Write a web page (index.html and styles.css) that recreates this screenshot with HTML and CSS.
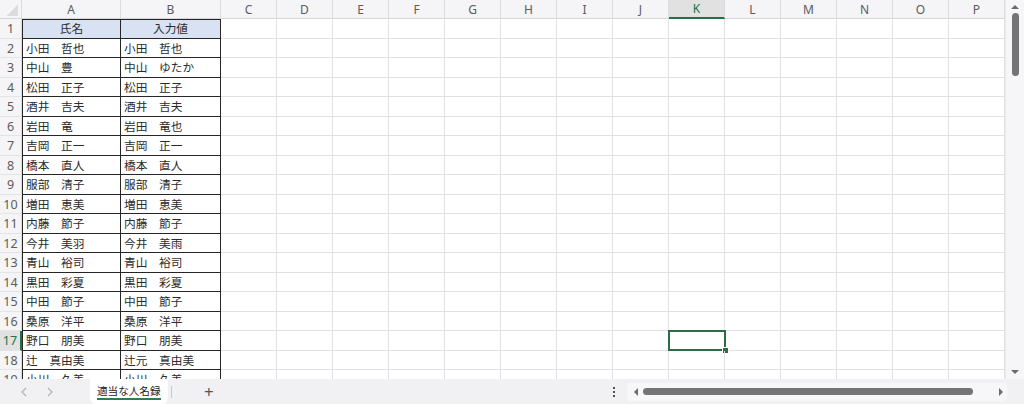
FILE: index.html
```html
<!DOCTYPE html>
<html lang="ja">
<head>
  <meta charset="UTF-8">
  <title>適当な人名録</title>
  <link rel="stylesheet" href="styles.css">
</head>
<body>

  <div class="book">
    <div class="main">
      <div class="sheet">
        <!-- column headings -->
        <div class="corner"></div>
        <div class="ch">A</div>
        <div class="ch">B</div>
        <div class="heads">
          <div class="ch w">C</div><div class="ch w">D</div><div class="ch w">E</div><div class="ch w">F</div>
          <div class="ch w">G</div><div class="ch w">H</div><div class="ch w">I</div><div class="ch w">J</div>
          <div class="ch w active">K</div><div class="ch w">L</div><div class="ch w">M</div><div class="ch w">N</div>
          <div class="ch w">O</div><div class="ch w">P</div>
        </div>

        <div class="rn">1</div><div class="c a hd top">氏名</div><div class="c hd top">入力値</div><div class="blank"></div>
        <div class="rn">2</div><div class="c a">小田　哲也</div><div class="c">小田　哲也</div><div class="blank"></div>
        <div class="rn">3</div><div class="c a">中山　豊</div><div class="c">中山　ゆたか</div><div class="blank"></div>
        <div class="rn">4</div><div class="c a">松田　正子</div><div class="c">松田　正子</div><div class="blank"></div>
        <div class="rn">5</div><div class="c a">酒井　吉夫</div><div class="c">酒井　吉夫</div><div class="blank"></div>
        <div class="rn">6</div><div class="c a">岩田　竜</div><div class="c">岩田　竜也</div><div class="blank"></div>
        <div class="rn">7</div><div class="c a">吉岡　正一</div><div class="c">吉岡　正一</div><div class="blank"></div>
        <div class="rn">8</div><div class="c a">橋本　直人</div><div class="c">橋本　直人</div><div class="blank"></div>
        <div class="rn">9</div><div class="c a">服部　清子</div><div class="c">服部　清子</div><div class="blank"></div>
        <div class="rn">10</div><div class="c a">増田　恵美</div><div class="c">増田　恵美</div><div class="blank"></div>
        <div class="rn">11</div><div class="c a">内藤　節子</div><div class="c">内藤　節子</div><div class="blank"></div>
        <div class="rn">12</div><div class="c a">今井　美羽</div><div class="c">今井　美雨</div><div class="blank"></div>
        <div class="rn">13</div><div class="c a">青山　裕司</div><div class="c">青山　裕司</div><div class="blank"></div>
        <div class="rn">14</div><div class="c a">黒田　彩夏</div><div class="c">黒田　彩夏</div><div class="blank"></div>
        <div class="rn">15</div><div class="c a">中田　節子</div><div class="c">中田　節子</div><div class="blank"></div>
        <div class="rn">16</div><div class="c a">桑原　洋平</div><div class="c">桑原　洋平</div><div class="blank"></div>
        <div class="rn active">17</div><div class="c a">野口　朋美</div><div class="c">野口　朋美</div><div class="blank"><span class="cursor"></span></div>
        <div class="rn">18</div><div class="c a">辻　真由美</div><div class="c">辻元　真由美</div><div class="blank"></div>
        <div class="rn">19</div><div class="c a">小川　久美</div><div class="c">小川　久美</div><div class="blank"></div>
      </div>

      <div class="vscroll">
        <span class="arrow up"></span>
        <span class="vthumb"></span>
        <span class="arrow down"></span>
      </div>
    </div>

    <div class="tabbar">
      <div class="nav">
        <svg width="6" height="10" viewBox="0 0 6 10"><path d="M5 1 1 5l4 4" fill="none" stroke="#b3b3b3" stroke-width="1.2"/></svg>
        <svg width="6" height="10" viewBox="0 0 6 10"><path d="M1 1l4 4-4 4" fill="none" stroke="#b3b3b3" stroke-width="1.2"/></svg>
      </div>
      <div class="tab"><span>適当な人名録</span></div>
      <div class="sep"></div>
      <div class="add">+</div>
      <div class="spacer"></div>
      <div class="more"><i></i><i></i><i></i></div>
      <div class="hscroll">
        <span class="arrow left"></span>
        <span class="hthumb"></span>
        <span class="arrow right"></span>
      </div>
      <div class="corner-fill"></div>
    </div>
  </div>

</body>
</html>
```

FILE: styles.css
```css
* {
  box-sizing: border-box;
}

body {
  margin: 0;
  overflow: hidden;
  background: #ffffff;
  font-family: 'Noto Sans', 'Noto Sans CJK JP', sans-serif;
}

.book {
  width: 1024px;
  height: 404px;
  display: flex;
  flex-direction: column;
}

.main {
  display: flex;
  height: 379px;
}

.sheet {
  width: 1005px;
  overflow: hidden;
  display: grid;
  grid-template-columns: 22px 99px 100px 784px;
  grid-template-rows: 19px;
  grid-auto-rows: 19.5px;
}

/* headings */
.corner {
  background: #f5f4f6 linear-gradient(to bottom right, transparent 50%, #dcdcdc 50%) no-repeat right 3px bottom 2px / 11px 11px;
  border-right: 1px solid #dcdcdc;
  border-bottom: 1px solid #d6d6d6;
}

.heads {
  display: flex;
}

.ch {
  background: #f5f4f6;
  border-right: 1px solid #dcdcdc;
  border-bottom: 1px solid #d6d6d6;
  color: #5c5c5c;
  font-size: 12px;
  line-height: 19px;
  text-align: center;
}

.ch.w {
  width: 56px;
  flex: none;
}

.ch.active {
  background: #e1e1e1;
  color: #217346;
  border-bottom: 2px solid #217346;
  line-height: 18px;
}

.rn {
  background: #f5f4f6;
  border-right: 1px solid #dcdcdc;
  border-bottom: 1px solid #e4e4e4;
  color: #5c5c5c;
  font-size: 12.5px;
  line-height: 19px;
  text-align: center;
}

.rn.active {
  background: #e1e1e1;
  color: #217346;
  border-right: 2px solid #217346;
}

/* table cells */
.c {
  padding: 0 3px;
  border-right: 1px solid #262626;
  border-bottom: 1px solid #262626;
  font-family: 'Noto Sans CJK JP', sans-serif;
  font-size: 11.7px;
  line-height: 18.5px;
  color: #2b2b2b;
  white-space: nowrap;
  overflow: hidden;
}

.c.a {
  box-shadow: inset 1px 0 0 #262626;
  padding-left: 4px;
}

.c.hd {
  background: #d9e2f3;
  text-align: center;
}

.c.top {
  box-shadow: inset 0 1px 0 #262626;
}

.c.a.top {
  box-shadow: inset 1px 0 0 #262626, inset 0 1px 0 #262626;
}

.blank {
  position: relative;
  border-bottom: 1px solid #e1e1e1;
  background: repeating-linear-gradient(to right, transparent 0 55px, #e1e1e1 55px 56px);
}

.cursor {
  position: absolute;
  left: 447px;
  top: -1px;
  width: 58px;
  height: 21px;
  border: 2px solid #2e6b47;
}

.cursor::after {
  content: '';
  position: absolute;
  right: -5px;
  bottom: -5px;
  width: 5px;
  height: 5px;
  background: #2e6b47;
  border: 1px solid #ffffff;
}

/* vertical scrollbar */
.vscroll {
  position: relative;
  width: 19px;
  background: #f6f6f8;
  border-left: 1px solid #ececec;
}

.vthumb {
  position: absolute;
  left: 6px;
  top: 13px;
  width: 7px;
  height: 63px;
  border-radius: 4px;
  background: #747474;
}

.arrow {
  position: absolute;
  width: 0;
  height: 0;
  border: 4px solid transparent;
}

.arrow.up {
  left: 5px;
  top: 1px;
  border-bottom-color: #6b6b6b;
}

.arrow.down {
  left: 5px;
  bottom: 1px;
  border-top-color: #6b6b6b;
}

/* sheet tabs */
.tabbar {
  height: 25px;
  display: flex;
  align-items: center;
  background: #f1f1f4;
}

.nav {
  width: 90px;
  height: 25px;
  display: flex;
  align-items: center;
  gap: 20px;
  padding-left: 21px;
}

.tab {
  width: 78px;
  height: 25px;
  background: #ffffff;
  border-radius: 0 0 6px 6px;
  padding-left: 7px;
  font-family: 'Noto Sans CJK JP', sans-serif;
  font-size: 10.6px;
  color: #222;
  white-space: nowrap;
}

.tab span {
  display: inline-block;
  line-height: 15px;
  margin-top: 4px;
  border-bottom: 2px solid #2e7d4f;
}

.sep {
  width: 1px;
  height: 12px;
  margin-left: 3px;
  background: #c9c9c9;
}

.add {
  margin-left: 32px;
  color: #555;
  font-size: 17px;
  line-height: 20px;
}

.spacer {
  flex: 1;
}

.more {
  width: 8px;
  height: 10px;
  display: flex;
  flex-direction: column;
  justify-content: space-between;
  align-items: center;
  margin-right: 9px;
}

.more i {
  width: 2px;
  height: 2px;
  background: #555;
}

.hscroll {
  position: relative;
  width: 380px;
  height: 18px;
  background: #f7f7f9;
  border-radius: 4px;
}

.hthumb {
  position: absolute;
  left: 16px;
  top: 5px;
  width: 330px;
  height: 7px;
  border-radius: 4px;
  background: #747474;
}

.arrow.left {
  left: 3px;
  top: 5px;
  border-right-color: #6b6b6b;
}

.arrow.right {
  right: 0;
  top: 5px;
  border-left-color: #6b6b6b;
}

.corner-fill {
  width: 17px;
}
```
